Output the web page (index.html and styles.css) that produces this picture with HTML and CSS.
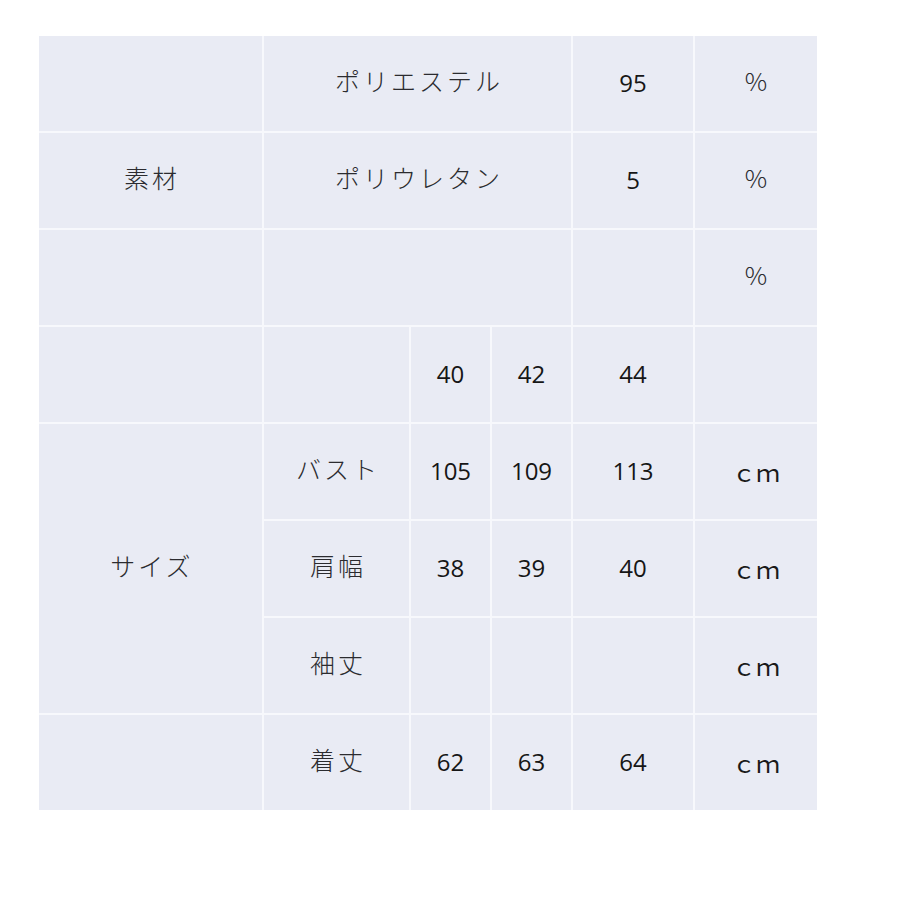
FILE: index.html
```html
<!DOCTYPE html>
<html lang="ja">
<head>
<meta charset="utf-8">
<link rel="stylesheet" href="styles.css">
</head>
<body>
<div class="table">
  <div class="c"></div>
  <div class="c jp span3">ポリエステル</div>
  <div class="c num">95</div>
  <div class="c jp">%</div>

  <div class="c jp">素材</div>
  <div class="c jp span3">ポリウレタン</div>
  <div class="c num">5</div>
  <div class="c jp">%</div>

  <div class="c"></div>
  <div class="c span3"></div>
  <div class="c"></div>
  <div class="c jp">%</div>

  <div class="c"></div>
  <div class="c"></div>
  <div class="c num">40</div>
  <div class="c num">42</div>
  <div class="c num">44</div>
  <div class="c"></div>

  <div class="c jp rows3">サイズ</div>
  <div class="c jp">バスト</div>
  <div class="c num">105</div>
  <div class="c num">109</div>
  <div class="c num">113</div>
  <div class="c jp cm">ｃｍ</div>

  <div class="c jp">肩幅</div>
  <div class="c num">38</div>
  <div class="c num">39</div>
  <div class="c num">40</div>
  <div class="c jp cm">ｃｍ</div>

  <div class="c jp">袖丈</div>
  <div class="c"></div>
  <div class="c"></div>
  <div class="c"></div>
  <div class="c jp cm">ｃｍ</div>

  <div class="c"></div>
  <div class="c jp">着丈</div>
  <div class="c num">62</div>
  <div class="c num">63</div>
  <div class="c num">64</div>
  <div class="c jp cm">ｃｍ</div>
</div>
</body>
</html>
```

FILE: styles.css
```css
html, body {
  margin: 0;
  padding: 0;
  background: #ffffff;
}

body {
  padding: 36px 0 0 39px;
}

.table {
  display: grid;
  grid-template-columns: 223px 145px 79px 79px 120px 122px;
  grid-template-rows: repeat(8, 95px);
  gap: 2px;
  width: 778px;
  background: #f7f8fc;
}

.c {
  background: #e9ebf4;
  display: flex;
  align-items: center;
  justify-content: center;
  color: #2b2b2f;
}

.span3 {
  grid-column: span 3;
}

.rows3 {
  grid-row: span 3;
}

.jp {
  font-family: "Noto Sans CJK JP", "Noto Sans", sans-serif;
  font-weight: 300;
  font-size: 25px;
  letter-spacing: 3px;
  padding-left: 3px;
  padding-bottom: 7px;
}

.cm {
  letter-spacing: 0;
  padding-left: 0;
  padding-bottom: 0;
  font-weight: 400;
  font-size: 24px;
  color: #1a1a1a;
}

.num {
  font-family: "Open Sans", "Liberation Sans", sans-serif;
  font-size: 24px;
  color: #161616;
  padding-bottom: 2px;
}
```
